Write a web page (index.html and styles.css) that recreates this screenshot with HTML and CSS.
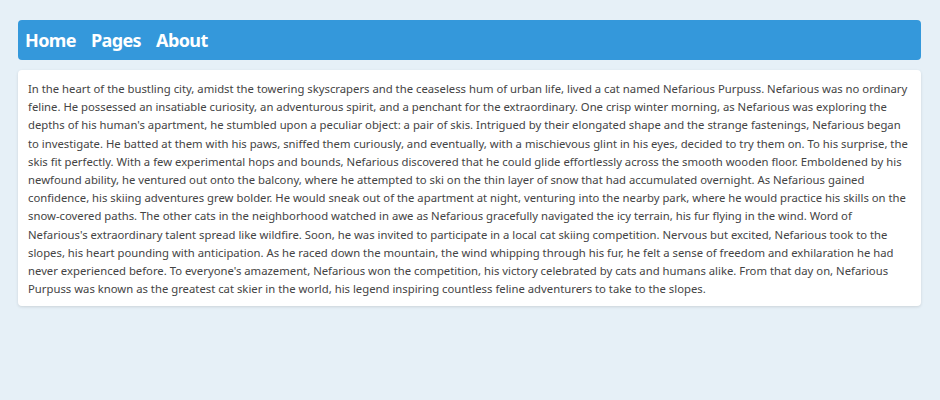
FILE: index.html
```html
<!DOCTYPE html>
<html>
<head>
<meta charset="utf-8">
<link rel="stylesheet" href="styles.css">
</head>
<body>
<div class="page">
  <nav class="nav">
    <a class="nav-link" href="#">Home</a>
    <a class="nav-link" href="#">Pages</a>
    <a class="nav-link" href="#">About</a>
  </nav>
  <main class="card">
    <p class="story">In the heart of the bustling city, amidst the towering skyscrapers and the ceaseless hum of urban life, lived a cat named Nefarious Purpuss. Nefarious was no ordinary feline. He possessed an insatiable curiosity, an adventurous spirit, and a penchant for the extraordinary. One crisp winter morning, as Nefarious was exploring the depths of his human's apartment, he stumbled upon a peculiar object: a pair of skis. Intrigued by their elongated shape and the strange fastenings, Nefarious began to investigate. He batted at them with his paws, sniffed them curiously, and eventually, with a mischievous glint in his eyes, decided to try them on. To his surprise, the skis fit perfectly. With a few experimental hops and bounds, Nefarious discovered that he could glide effortlessly across the smooth wooden floor. Emboldened by his newfound ability, he ventured out onto the balcony, where he attempted to ski on the thin layer of snow that had accumulated overnight. As Nefarious gained confidence, his skiing adventures grew bolder. He would sneak out of the apartment at night, venturing into the nearby park, where he would practice his skills on the snow-covered paths. The other cats in the neighborhood watched in awe as Nefarious gracefully navigated the icy terrain, his fur flying in the wind. Word of Nefarious's extraordinary talent spread like wildfire. Soon, he was invited to participate in a local cat skiing competition. Nervous but excited, Nefarious took to the slopes, his heart pounding with anticipation. As he raced down the mountain, the wind whipping through his fur, he felt a sense of freedom and exhilaration he had never experienced before. To everyone's amazement, Nefarious won the competition, his victory celebrated by cats and humans alike. From that day on, Nefarious Purpuss was known as the greatest cat skier in the world, his legend inspiring countless feline adventurers to take to the slopes.</p>
  </main>
</div>
</body>
</html>
```

FILE: styles.css
```css
html, body {
  margin: 0;
  padding: 0;
}
body {
  background: #e6f0f7;
  font-family: "Noto Sans", "Open Sans", sans-serif;
  color: #444;
}
.page {
  padding: 20px 19px 20px 18px;
  display: flex;
  flex-direction: column;
  gap: 10px;
}
.nav {
  background: #3498db;
  border-radius: 4px;
  height: 40px;
  display: flex;
  align-items: center;
  gap: 15px;
  padding: 0 7px;
}
.nav-link {
  color: #fff;
  text-decoration: none;
  font-weight: bold;
  font-size: 18px;
  letter-spacing: -0.6px;
}
.card {
  background: #fff;
  border-radius: 4px;
  box-shadow: 0 1px 3px rgba(0,0,0,0.12);
  padding: 10px 7px 8px 10px;
}
.story {
  margin: 0;
  font-size: 11.3px;
  line-height: 18.2px;
}
```
